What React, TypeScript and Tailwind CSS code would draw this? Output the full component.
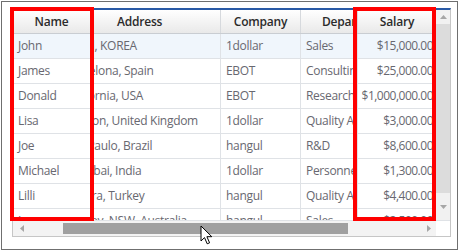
import React from "react";

type Row = {
  name: string;
  addr: string;
  company: string;
  dept: string;
  salary: string;
};

const rows: Row[] = [
  { name: "John", addr: "Seoul, KOREA", company: "1dollar", dept: "Sales", salary: "$15,000.00" },
  { name: "James", addr: "Barcelona, Spain", company: "EBOT", dept: "Consulting", salary: "$25,000.00" },
  { name: "Donald", addr: "California, USA", company: "EBOT", dept: "Research", salary: "$1,000,000.00" },
  { name: "Lisa", addr: "London, United Kingdom", company: "1dollar", dept: "Quality Assurance", salary: "$3,000.00" },
  { name: "Joe", addr: "Sao Paulo, Brazil", company: "hangul", dept: "R&D", salary: "$8,600.00" },
  { name: "Michael", addr: "Mumbai, India", company: "1dollar", dept: "Personnel", salary: "$1,300.00" },
  { name: "Lilli", addr: "Ankara, Turkey", company: "hangul", dept: "Quality Assurance", salary: "$4,400.00" },
  { name: "Lucas", addr: "Sydney, NSW, Australia", company: "hangul", dept: "Sales", salary: "$2,500.00" },
];

const font = { fontFamily: '"Open Sans", "Noto Sans", sans-serif' };

function Cursor() {
  return (
    <svg
      className="absolute left-[200px] top-[225px]"
      width="14"
      height="21"
      viewBox="0 0 14 21"
    >
      <path
        d="M1 1 L1 16 L4.5 12.6 L7.2 18.8 L9.6 17.8 L6.9 11.7 L11.8 11.7 Z"
        fill="#fff"
        stroke="#000"
        strokeWidth="1"
        strokeLinejoin="round"
      />
    </svg>
  );
}

export default function App() {
  return (
    <div className="relative w-[460px] h-[250px] bg-white" style={font}>
      {/* window frame */}
      <div className="absolute left-[1px] top-[1px] w-[457px] h-[249px] border border-[#6f6f6f]" />
      <div className="pl-[12px] pt-[8px]">
        {/* grid */}
        <div className="w-[439px] h-[229px] border-x border-b border-[#c6c6c6] border-t-2 border-t-[#2a5aa6] flex flex-col bg-white">
          <div className="flex h-[212px]">
            <div className="flex-1 flex flex-col min-w-0">
              {/* header */}
              <div className="flex h-[24px] shrink-0 border-b border-[#c9cdd2] bg-gradient-to-b from-[#ffffff] to-[#e9e9e9] text-[12px] font-semibold text-[#2b2b2b] tracking-[-0.2px]">
                <div className="w-[78px] shrink-0 border-r border-[#d6d9dd] flex items-center justify-center">Name</div>
                <div className="w-[130px] shrink-0 border-r border-[#d6d9dd] flex items-center pl-[26px]">Address</div>
                <div className="w-[80px] shrink-0 border-r border-[#d6d9dd] flex items-center justify-center">Company</div>
                <div className="w-[57px] shrink-0 border-r border-[#d6d9dd] flex items-center pl-[21px] overflow-hidden whitespace-nowrap">Department</div>
                <div className="flex-1 flex items-center justify-center">Salary</div>
              </div>
              {/* body */}
              <div className="h-[186px] overflow-hidden text-[12px] text-[#686870] tracking-[-0.3px]">
                {rows.map((r, i) => (
                  <div
                    key={r.name}
                    className={`flex h-[25px] border-b border-[#dfe2e6] ${i === 0 ? "bg-[#f0f6fc]" : "bg-white"}`}
                  >
                    <div className="w-[78px] shrink-0 border-r border-[#dfe2e6] flex items-center pl-[5px]">{r.name}</div>
                    <div className="w-[130px] shrink-0 border-r border-[#dfe2e6] flex items-center pl-[5px] overflow-hidden whitespace-nowrap">
                      <span className="ml-[-31px]">{r.addr}</span>
                    </div>
                    <div className="w-[80px] shrink-0 border-r border-[#dfe2e6] flex items-center pl-[5px]">{r.company}</div>
                    <div className="w-[57px] shrink-0 border-r border-[#dfe2e6] flex items-center pl-[5px] overflow-hidden whitespace-nowrap">{r.dept}</div>
                    <div className="flex-1 min-w-0 flex items-center justify-end pr-[3px] whitespace-nowrap overflow-hidden tracking-[-0.5px]">{r.salary}</div>
                  </div>
                ))}
              </div>
            </div>
            {/* vertical scrollbar */}
            <div className="w-[14px] shrink-0 bg-[#f1f1f1] flex flex-col items-center">
              <div className="h-[14px] w-full flex items-center justify-center">
                <svg width="7" height="4" viewBox="0 0 7 4"><path d="M0 4 L3.5 0 L7 4 Z" fill="#a6a6a6" /></svg>
              </div>
              <div className="h-[169px] w-full bg-[#dcdcdc]" />
              <div className="flex-1 w-full flex items-center justify-center">
                <svg width="7" height="4" viewBox="0 0 7 4"><path d="M0 0 L7 0 L3.5 4 Z" fill="#a6a6a6" /></svg>
              </div>
            </div>
          </div>
          {/* horizontal scrollbar */}
          <div className="flex h-[16px] border-t border-[#dfe2e6]">
            <div className="flex-1 bg-[#f3f3f3] flex items-center">
              <div className="w-[17px] flex justify-center">
                <svg width="4" height="7" viewBox="0 0 4 7"><path d="M4 0 L0 3.5 L4 7 Z" fill="#a6a6a6" /></svg>
              </div>
              <div className="ml-[33px] w-[285px] h-[11px] bg-[#a0a0a0]" />
              <div className="flex-1 flex justify-end pr-[5px]">
                <svg width="4" height="7" viewBox="0 0 4 7"><path d="M0 0 L4 3.5 L0 7 Z" fill="#a6a6a6" /></svg>
              </div>
            </div>
            <div className="w-[14px] bg-white" />
          </div>
        </div>
      </div>
      {/* highlight boxes */}
      <div className="absolute left-[10px] top-[7px] w-[84px] h-[214px] border-4 border-[#ff0000]" />
      <div className="absolute left-[353px] top-[7px] w-[83px] h-[214px] border-4 border-[#ff0000]" />
      <Cursor />
    </div>
  );
}
